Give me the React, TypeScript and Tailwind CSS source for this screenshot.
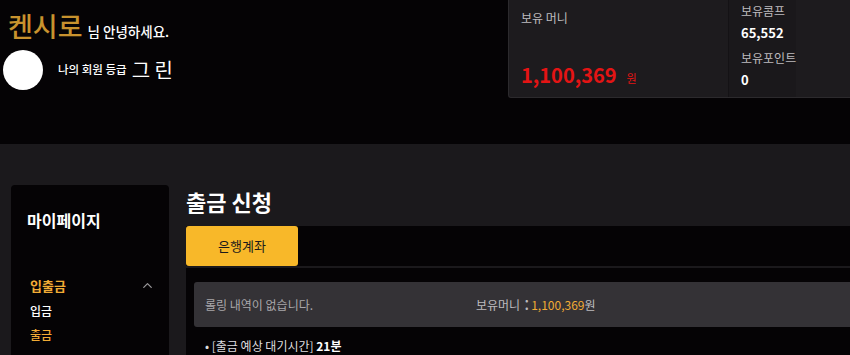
import React, { ReactElement } from 'react';
import { ChevronUp } from 'lucide-react';

const font = { fontFamily: '"Noto Sans CJK KR", "Noto Sans", sans-serif' };

const Header = (): ReactElement => {
  return (
    <div className="flex h-[144px] bg-[#050305]">
      <div className="w-[508px] shrink-0 pl-[3px]">
        <div className="flex items-end pl-[5px] pt-[10px]">
          <span className="text-[27px] font-medium leading-[32px] text-[#c8922e]">켄시로</span>
          <span className="ml-[5px] mb-[2px] text-[13.5px] font-medium leading-[18px] text-white">
            님 안녕하세요.
          </span>
        </div>
        <div className="mt-[8px] flex items-center">
          <div className="h-[40px] w-[40px] rounded-full bg-white" />
          <span className="ml-[15px] text-[11.5px] font-medium text-white">나의 회원 등급</span>
          <span className="ml-[5px] text-[20px] leading-[24px] text-white">그 린</span>
        </div>
      </div>
      <div className="flex h-[98px] w-[400px] shrink-0 rounded-bl-[3px] border-b border-l border-[#2c2a2d] bg-[#1d1b1e]">
        <div className="flex w-[220px] flex-col justify-between border-r border-[#141215] pb-[7px] pl-[12px] pt-[9px]">
          <span className="text-[12px] text-[#bdbbbe]">보유 머니</span>
          <div className="flex items-baseline">
            <span className="text-[20px] font-bold text-[#e41414]">1,100,369</span>
            <span className="ml-[10px] text-[11px] text-[#e41414]">원</span>
          </div>
        </div>
        <div className="flex flex-col bg-[#1a181b] pl-[12px] pt-[1px]">
          <span className="text-[12px] leading-[20px] text-[#bdbbbe]">보유콤프</span>
          <span className="mt-[2px] text-[13px] font-bold leading-[20px] text-white">65,552</span>
          <span className="mt-[5px] text-[12px] leading-[20px] text-[#bdbbbe]">보유포인트</span>
          <span className="mt-[2px] text-[13px] font-bold leading-[20px] text-white">0</span>
        </div>
      </div>
    </div>
  );
};

const Sidebar = (): ReactElement => {
  return (
    <div className="w-[158px] shrink-0 self-stretch rounded-t-[4px] bg-[#050305] pl-[16px] pr-[14px] pt-[23px]">
      <div className="text-[16px] font-bold leading-[24px] text-white">마이페이지</div>
      <div className="mt-[44px] flex items-center justify-between pl-[3px]">
        <span className="text-[13px] font-bold text-[#f2ac35]">입출금</span>
        <ChevronUp size={15} strokeWidth={2} className="text-[#9a989b]" />
      </div>
      <div className="mt-[5px] pl-[3px] text-[12px] font-medium leading-[20px] text-white">입금</div>
      <div className="mt-[4px] pl-[3px] text-[12px] font-medium leading-[20px] text-[#f2ac35]">출금</div>
    </div>
  );
};

const Main = (): ReactElement => {
  return (
    <div className="w-[680px] shrink-0">
      <h1 className="text-[22px] font-bold leading-[32px] text-white">출금 신청</h1>
      <div className="mt-[9px] flex h-[40px] bg-[#050305]">
        <div className="flex w-[112px] items-center justify-center rounded-[3px] bg-[#f8b829] text-[13px] text-[#1b1b1b]">
          은행계좌
        </div>
      </div>
      <div className="mt-[2px] h-[100px] bg-[#050305] pl-[8px] pt-[14px]">
        <div className="flex h-[45px] items-center rounded-[3px] bg-[#343236] pl-[11px]">
          <span className="w-[271px] text-[12px] text-[#a9a7aa]">롤링 내역이 없습니다.</span>
          <span className="text-[12px] text-[#bdbbbe]">보유머니</span>
          <span className="ml-[4px] mr-[2px] mb-[5px] text-[18px] leading-[16px] text-[#bdbbbe]">:</span>
          <span className="text-[12px] text-[#f2ac35]">1,100,369</span>
          <span className="text-[12px] text-[#bdbbbe]">원</span>
        </div>
        <div className="mt-[11px] pl-[11px] text-[12px] leading-[16px] text-[#dedcdf]">
          • [출금 예상 대기시간] <span className="font-bold text-white">21분</span>
        </div>
      </div>
    </div>
  );
};

const App = (): ReactElement => {
  return (
    <div className="h-[355px] w-[850px] overflow-hidden bg-[#1b191c]" style={font}>
      <Header />
      <div className="flex h-[211px] gap-[17px] pl-[11px] pt-[41px]">
        <Sidebar />
        <Main />
      </div>
    </div>
  );
};

export default App;
